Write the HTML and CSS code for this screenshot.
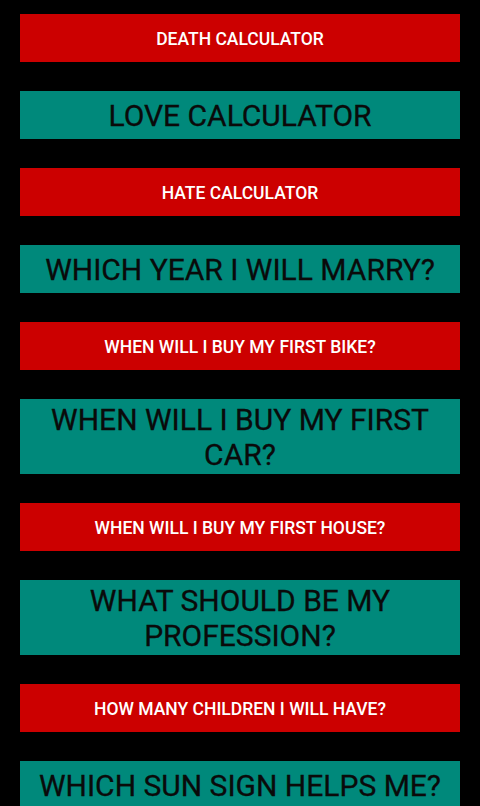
FILE: index.html
```html
<!DOCTYPE html>
<html lang="en">
<head>
    <meta charset="UTF-8">
    <meta name="viewport" content="width=device-width, initial-scale=1.0">
    <title>Fun Calculators</title>
    <link rel="stylesheet" href="styles.css">
</head>
<body>
    <div class="menu">
        <button class="btn red">DEATH CALCULATOR</button>
        <button class="btn teal">LOVE CALCULATOR</button>
        <button class="btn red">HATE CALCULATOR</button>
        <button class="btn teal">WHICH YEAR I WILL MARRY?</button>
        <button class="btn red">WHEN WILL I BUY MY FIRST BIKE?</button>
        <button class="btn teal">WHEN WILL I BUY MY FIRST CAR?</button>
        <button class="btn red">WHEN WILL I BUY MY FIRST HOUSE?</button>
        <button class="btn teal">WHAT SHOULD BE MY PROFESSION?</button>
        <button class="btn red">HOW MANY CHILDREN I WILL HAVE?</button>
        <button class="btn teal">WHICH SUN SIGN HELPS ME?</button>
    </div>
</body>
</html>
```

FILE: styles.css
```css
body {
    margin: 0;
    background: #000;
    font-family: Roboto, 'Noto Sans', sans-serif;
    overflow: hidden;
}

.menu {
    display: flex;
    flex-direction: column;
    gap: 29px;
    padding: 14px 20px;
}

.btn {
    min-height: 48px;
    border: none;
    border-radius: 0;
    padding: 4px 16px 2px;
    margin: 0;
    font-family: inherit;
    text-align: center;
    cursor: pointer;
}

.red {
    background: #cc0000;
    color: #fff;
    font-size: 17.5px;
    font-weight: 500;
}

.teal {
    background: #00897b;
    color: #0a0a0a;
    font-size: 30px;
    font-weight: 400;
    line-height: 34.5px;
    -webkit-text-stroke: 0.3px #0a0a0a;
}
```
